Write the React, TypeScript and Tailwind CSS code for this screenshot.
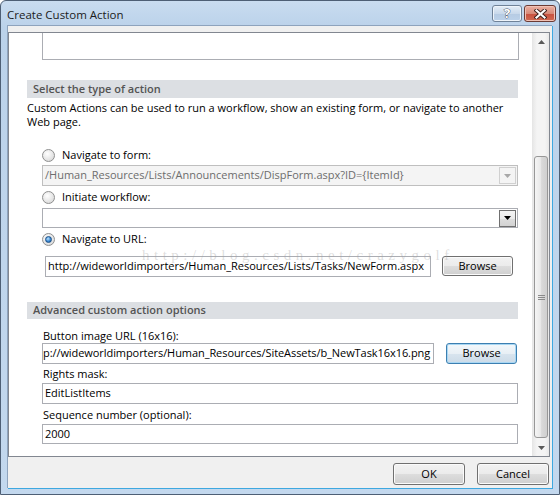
import type { ReactNode } from "react";

function Arrow({ up, color }: { up?: boolean; color: string }) {
  return (
    <svg width="7" height="4" viewBox="0 0 7 4">
      <path d={up ? "M0 4h7L3.5 0z" : "M0 0h7L3.5 4z"} fill={color} />
    </svg>
  );
}

function Radio({ checked }: { checked?: boolean }) {
  return (
    <span className="flex h-[13px] w-[13px] items-center justify-center rounded-full border border-[#8e8f8f] bg-[radial-gradient(circle_at_40%_35%,#ffffff,#e4e4e4_60%,#cfcfcf)]">
      {checked && (
        <span className="h-[7px] w-[7px] rounded-full border border-[#1b4f86] bg-[radial-gradient(circle_at_40%_35%,#bfe3fb,#3b8ad6_55%,#14508f)]" />
      )}
    </span>
  );
}

function WinButton({ children, className = "", focused }: { children: ReactNode; className?: string; focused?: boolean }) {
  return (
    <div
      className={`flex items-center justify-center rounded-[3px] border text-black ${
        focused
          ? "border-[#3c7fb1] bg-[linear-gradient(#f3f8fb_0%,#e8eff5_50%,#d8e4ee_51%,#ccdbe8_100%)] shadow-[inset_0_0_0_1px_#a9d7f3]"
          : "border-[#707070] bg-[linear-gradient(#f2f2f2_0%,#ebebeb_50%,#dddddd_51%,#cfcfcf_100%)] shadow-[inset_0_0_0_1px_#fbfbfb]"
      } ${className}`}
    >
      {children}
    </div>
  );
}

function Combo({ disabled, text }: { disabled?: boolean; text?: string }) {
  return (
    <div
      className={`ml-[15px] flex w-[476px] items-center border ${
        disabled ? "mt-[2px] h-[21px] border-[#bfbfbf] bg-[#f4f4f4] text-[#6d6d6d]" : "mt-[3px] h-[20px] border-[#abadb3] bg-white"
      }`}
    >
      <span className="flex-1 overflow-hidden whitespace-nowrap pl-[2px]">{text}</span>
      <span
        className={`mr-[1px] flex h-[17px] w-[17px] items-center justify-center border ${
          disabled
            ? "border-[#d0d0d0] bg-[#f4f4f4]"
            : "border-[#707070] bg-[linear-gradient(#f4f4f4,#ebebeb_50%,#dddddd_51%,#d2d2d2)]"
        }`}
      >
        <Arrow color={disabled ? "#a8a8a8" : "#000"} />
      </span>
    </div>
  );
}

function SectionHeader({ children, className = "" }: { children: ReactNode; className?: string }) {
  return (
    <div className={`flex h-[17px] items-center bg-[#dcdfe3] pl-[6px] font-semibold text-[#545454] ${className}`}>
      {children}
    </div>
  );
}

function RadioRow({ checked, label }: { checked?: boolean; label: string }) {
  return (
    <div className="ml-[15px] mt-[3px] flex h-[16px] items-center gap-[7px]">
      <Radio checked={checked} />
      <span>{label}</span>
    </div>
  );
}

export default function App() {
  return (
    <div className="h-[495px] w-[560px] bg-white font-['Open_Sans',sans-serif] text-[11px] text-black">
      <div className="flex h-full w-full flex-col rounded-t-[6px] border border-[#4e5f75] bg-[linear-gradient(#c9dcf0,#bbd2ea_26px,#c3d8ee)]">
        {/* title bar */}
        <div className="flex h-[25px] items-start">
          <span className="pl-[6px] pt-[5px] text-[11.5px] text-[#1b1b1b]">Create Custom Action</span>
          <div className="ml-auto flex gap-[2px] pr-[3px] pt-[4px]">
            <div className="flex h-[17px] w-[30px] items-center justify-center rounded-[3px] border border-[#6f8298] bg-[linear-gradient(#e3edf7,#c9d9eb_50%,#b6cbe3_51%,#bcd2ea)] shadow-[inset_0_0_0_1px_#eef4fa]">
              <span className="text-[13px] font-bold leading-none text-white [-webkit-text-stroke:0.8px_#3a4656] [paint-order:stroke_fill]">?</span>
            </div>
            <div className="flex h-[17px] w-[32px] items-center justify-center rounded-[3px] border border-[#6b3b35] bg-[linear-gradient(#eab0a3,#d88a78_50%,#c8503e_51%,#d06a52)] shadow-[inset_0_0_0_1px_#f0c2b6]">
              <svg width="13" height="10" viewBox="0 0 13 10">
                <path d="M2.5 1.5l8 7M10.5 1.5l-8 7" stroke="#3b1f1c" strokeWidth="4" strokeLinecap="square" />
                <path d="M2.5 1.5l8 7M10.5 1.5l-8 7" stroke="#ffffff" strokeWidth="2.2" strokeLinecap="square" />
              </svg>
            </div>
          </div>
        </div>

        {/* body */}
        <div className="ml-[7px] h-[463px] w-[545px] border-b border-r border-[#3ea8e0] shadow-[-1px_-1px_0_#8ea3bd]">
          <div className="flex h-[462px] w-[544px] flex-col bg-[#f0f0f0]">
            {/* scroll panel */}
            <div className="mt-[6px] flex h-[425px] w-[542px] border border-[#828790] bg-white">
              <div className="relative flex flex-1 flex-col overflow-hidden pl-[18px] pr-[14px]">
                <div className="ml-[15px] h-[27px] w-[477px] border-x border-b border-[#abadb3]" />

                <SectionHeader className="mt-[20px] h-[18px]">Select the type of action</SectionHeader>
                <div className="mt-[3px] whitespace-nowrap leading-[14px]">
                  Custom Actions can be used to run a workflow, show an existing form, or navigate to another
                  <br />
                  Web page.
                </div>

                <div className="mt-[15px]" />
                <RadioRow label="Navigate to form:" />
                <Combo disabled text="/Human_Resources/Lists/Announcements/DispForm.aspx?ID={ItemId}" />
                <RadioRow label="Initiate workflow:" />
                <Combo />
                <RadioRow checked label="Navigate to URL:" />

                <div className="mt-[9px] flex items-start">
                  <div className="ml-[18px] flex h-[21px] w-[386px] items-center overflow-hidden whitespace-nowrap border border-[#abadb3] bg-white pl-[2px]">
                    http://wideworldimporters/Human_Resources/Lists/Tasks/NewForm.aspx
                  </div>
                  <WinButton className="ml-[11px] h-[20px] w-[71px]">Browse</WinButton>
                </div>

                <SectionHeader className="mt-[25px]">Advanced custom action options</SectionHeader>

                <div className="ml-[16px] mt-[9px] h-[15px] leading-[15px]">Button image URL (16x16):</div>
                <div className="flex items-start">
                  <div className="ml-[15px] flex h-[21px] w-[392px] items-center overflow-hidden whitespace-nowrap border border-[#abadb3] bg-white tracking-[-0.07px]">
                    p://wideworldimporters/Human_Resources/SiteAssets/b_NewTask16x16.png
                  </div>
                  <WinButton focused className="ml-[12px] h-[21px] w-[71px]">
                    Browse
                  </WinButton>
                </div>

                <div className="ml-[16px] mt-[2px] h-[15px] leading-[15px]">Rights mask:</div>
                <div className="ml-[15px] mt-[2px] flex h-[21px] w-[476px] items-center border border-[#abadb3] bg-white pl-[2px]">
                  EditListItems
                </div>

                <div className="ml-[16px] mt-[3px] h-[15px] leading-[15px]">Sequence number (optional):</div>
                <div className="ml-[15px] mt-[2px] flex h-[20px] w-[476px] items-center border border-[#abadb3] bg-white pl-[2px]">
                  2000
                </div>

                {/* watermark */}
                <span className="pointer-events-none absolute left-[133px] top-[214px] whitespace-nowrap font-['Liberation_Serif',serif] text-[15px] leading-[16px] tracking-[4.5px] text-[#a0a0a0]/35">
                  http://blog.csdn.net/crazygolf
                </span>
              </div>

              {/* scrollbar */}
              <div className="flex w-[17px] flex-col border-l border-[#e6e6e6] bg-[linear-gradient(90deg,#e8e8e8,#f4f4f4_25%,#f4f4f4_75%,#e8e8e8)]">
                <div className="flex h-[17px] items-center justify-center">
                  <Arrow up color="#5a5a5a" />
                </div>
                <div className="h-[106px]" />
                <div className="mx-[1px] flex h-[282px] items-center justify-center rounded-[3px] border border-[#979797] bg-[linear-gradient(90deg,#f5f5f5,#e9e9e9_45%,#d9d9d9_55%,#cfcfcf)]">
                  <div className="flex flex-col gap-[1px]">
                    <span className="h-[1px] w-[7px] bg-[#8a8a8a]" />
                    <span className="h-[1px] w-[7px] bg-[#8a8a8a]" />
                    <span className="h-[1px] w-[7px] bg-[#8a8a8a]" />
                  </div>
                </div>
                <div className="flex-1" />
                <div className="flex h-[17px] items-center justify-center">
                  <Arrow color="#5a5a5a" />
                </div>
              </div>
            </div>

            {/* footer */}
            <div className="mt-[6px] flex justify-end gap-[12px] pr-[3px]">
              <WinButton className="h-[22px] w-[72px]">OK</WinButton>
              <WinButton className="h-[22px] w-[72px]">Cancel</WinButton>
            </div>
          </div>
        </div>
      </div>
    </div>
  );
}
